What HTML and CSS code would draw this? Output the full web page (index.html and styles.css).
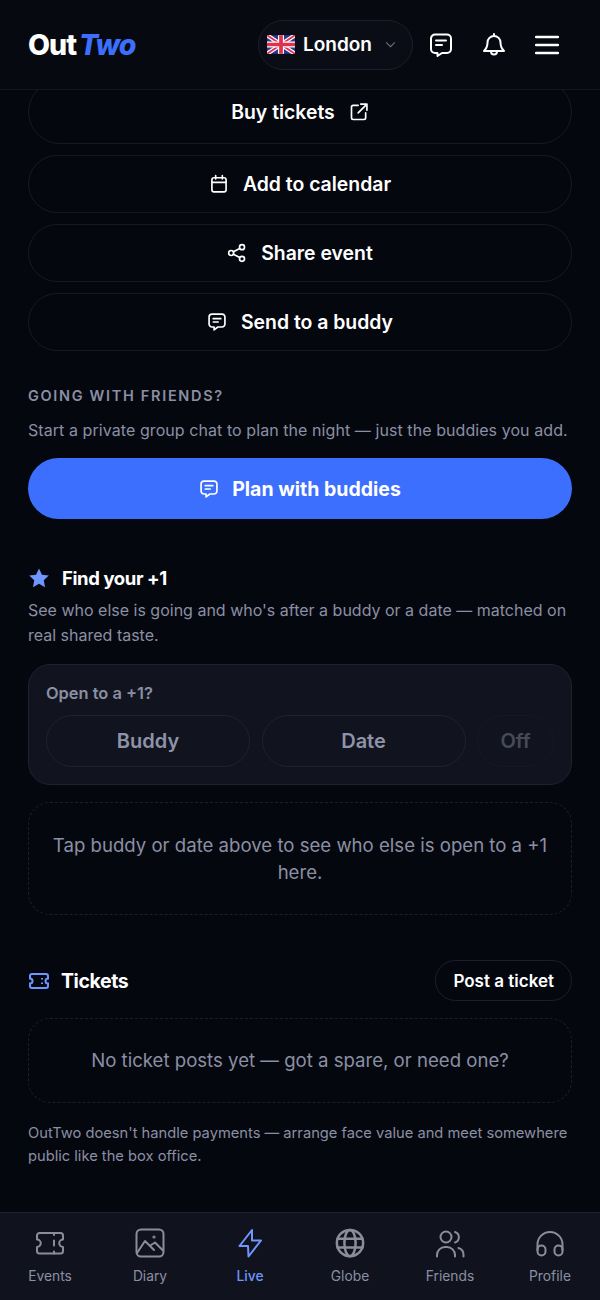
FILE: index.html
```html
<!DOCTYPE html>
<html lang="en">
<head>
    <meta charset="UTF-8">
    <title>OutTwo</title>
    <link rel="stylesheet" href="styles.css">
</head>
<body>
    <div class="app">
        <header class="topbar">
            <div class="logo">Out<em>Two</em></div>
            <button class="city">
                <svg class="flag" viewBox="0 0 60 40">
                    <rect width="60" height="40" rx="3" fill="#24398f"/>
                    <path d="M0 0L60 40M60 0L0 40" stroke="#fff" stroke-width="9"/>
                    <path d="M0 0L60 40M60 0L0 40" stroke="#e0304c" stroke-width="4"/>
                    <path d="M30 0V40M0 20H60" stroke="#fff" stroke-width="13"/>
                    <path d="M30 0V40M0 20H60" stroke="#e0304c" stroke-width="8"/>
                </svg>
                <span>London</span>
                <svg class="chev" viewBox="0 0 24 24"><path d="M4 8l8 8 8-8"/></svg>
            </button>
            <div class="top-btn">
                <svg class="ico top-ico" viewBox="0 0 24 24"><path d="M6 1.500h12a4 4 0 0 1 4 4V16a4 4 0 0 1-4 4h-5l-4.500 3v-3H6a4 4 0 0 1-4-4V5.500a4 4 0 0 1 4-4Z"/><path d="M7 7.500h10M7 12h6"/></svg>
            </div>
            <div class="top-btn">
                <svg class="ico top-ico" viewBox="0 0 24 24"><path d="M12 3a6.500 6.500 0 0 0-6.500 6.500c0 5-2 7-3.500 8.500h20c-1.500-1.500-3.500-3.500-3.500-8.500A6.500 6.500 0 0 0 12 3Z"/><path d="M12 1v2M9 18.500a3 3 0 0 0 6 0"/></svg>
            </div>
            <div class="top-btn">
                <svg class="ico top-ico menu-ico" viewBox="0 0 24 24"><path d="M1 4h22M1 12h22M1 20h22"/></svg>
            </div>
        </header>

        <main class="content">
            <div class="actions">
                <button class="btn btn-tall">Buy tickets <svg class="ico btn-ico" viewBox="0 0 24 24"><path d="M11 4H5a2 2 0 0 0-2 2v13a2 2 0 0 0 2 2h13a2 2 0 0 0 2-2v-6M14 2.500h7.500V10M21.500 2.500L11 13"/></svg></button>
                <button class="btn"><svg class="ico btn-ico" viewBox="0 0 24 24"><rect x="3.500" y="4.500" width="17" height="17" rx="2.500"/><path d="M3.500 10h17M8 2v4M16 2v4"/></svg> Add to calendar</button>
                <button class="btn"><svg class="ico btn-ico" viewBox="0 0 24 24"><circle cx="18" cy="5" r="3"/><circle cx="5" cy="12" r="3"/><circle cx="18" cy="19" r="3"/><path d="M7.700 10.500l7.600-4M7.700 13.500l7.600 4"/></svg> Share event</button>
                <button class="btn"><svg class="ico btn-ico" viewBox="0 0 24 24"><path d="M6 2.500h12a3.500 3.500 0 0 1 3.500 3.500v8.500a3.500 3.500 0 0 1-3.500 3.500h-5l-4.500 3.500v-3.500H6a3.500 3.500 0 0 1-3.500-3.500V6A3.500 3.500 0 0 1 6 2.500Z"/><path d="M7.500 8h9M7.500 12h6"/></svg> Send to a buddy</button>
            </div>

            <h4 class="eyebrow">GOING WITH FRIENDS?</h4>
            <p class="note">Start a private group chat to plan the night — just the buddies you add.</p>
            <button class="btn-primary"><svg class="ico btn-ico" viewBox="0 0 24 24"><path d="M6 2.500h12a3.500 3.500 0 0 1 3.500 3.500v8.500a3.500 3.500 0 0 1-3.500 3.500h-5l-4.500 3.500v-3.500H6a3.500 3.500 0 0 1-3.500-3.500V6A3.500 3.500 0 0 1 6 2.500Z"/><path d="M7.500 8h9M7.500 12h6"/></svg> Plan with buddies</button>

            <div class="sec-head plus-head">
                <svg class="sec-ico" viewBox="0 0 24 24"><path class="star" d="M12 1.500l3.200 6.900 7.500.9-5.500 5.200 1.400 7.500L12 18.300l-6.600 3.700 1.400-7.500L1.300 9.300l7.500-.9Z"/></svg>
                <h3>Find your +1</h3>
            </div>
            <p class="note plus-note">See who else is going and who's after a buddy or a date — matched on real shared taste.</p>

            <div class="card">
                <div class="card-label">Open to a +1?</div>
                <div class="pills">
                    <div class="pill">Buddy</div>
                    <div class="pill">Date</div>
                    <div class="pill off">Off</div>
                </div>
            </div>

            <div class="empty empty-plus">Tap buddy or date above to see who else is open to a +1 here.</div>

            <div class="sec-head tickets-head">
                <svg class="sec-ico ticket-blue" viewBox="0 0 22 22"><path d="M4 4h14a2 2 0 0 1 2 2v2.500a2.500 2.500 0 0 0 0 5V16a2 2 0 0 1-2 2H4a2 2 0 0 1-2-2v-2.500a2.500 2.500 0 0 0 0-5V6a2 2 0 0 1 2-2Z"/><path d="M14 8v1.500M14 12.500V14"/></svg>
                <h3>Tickets</h3>
                <button class="btn-small">Post a ticket</button>
            </div>

            <div class="empty empty-tickets">No ticket posts yet — got a spare, or need one?</div>
            <p class="small-note">OutTwo doesn't handle payments — arrange face value and meet somewhere public like the box office.</p>
        </main>

        <nav class="tabbar">
            <a class="tab">
                <svg class="tab-ico" viewBox="0 0 30 30"><path d="M4.500 5h21a2.500 2.500 0 0 1 2.500 2.500v4a3.500 3.500 0 0 0 0 7.500v4a2.500 2.500 0 0 1-2.500 2.500h-21A2.500 2.500 0 0 1 2 23v-4a3.500 3.500 0 0 0 0-7.500v-4A2.500 2.500 0 0 1 4.500 5Z"/><path d="M19 5v2M19 12.500v5M19 23.500v2"/></svg>
                <span>Events</span>
            </a>
            <a class="tab">
                <svg class="tab-ico" viewBox="0 0 30 30"><rect x="1.500" y="1.500" width="27" height="27" rx="4.500"/><path d="M2 25l8-12 9 9M16 17l4-2.500 8 8"/><circle cx="19" cy="9" r=".6"/></svg>
                <span>Diary</span>
            </a>
            <a class="tab active">
                <svg class="tab-ico" viewBox="0 0 30 30"><path d="M17 2L4.500 18H13l.5 10.500L26 12.500h-9Z"/></svg>
                <span>Live</span>
            </a>
            <a class="tab">
                <svg class="tab-ico" viewBox="0 0 24 24"><circle cx="12" cy="12" r="10.500"/><ellipse cx="12" cy="12" rx="4.500" ry="10.500"/><path d="M2 8.500h20M2 15.500h20"/></svg>
                <span>Globe</span>
            </a>
            <a class="tab">
                <svg class="tab-ico" viewBox="0 0 30 30"><circle cx="11" cy="9" r="5.500"/><path d="M2 28.500V27a8 8 0 0 1 8-8h2a8 8 0 0 1 8 8v1.500M20 4a5.500 5.500 0 0 1 0 10.500M23.500 20a7 7 0 0 1 5 7v1.500"/></svg>
                <span>Friends</span>
            </a>
            <a class="tab">
                <svg class="tab-ico" viewBox="0 0 30 30"><path d="M2.500 22v-5.500a12.500 12.500 0 0 1 25 0V22"/><rect x="2.500" y="17.500" width="8" height="10" rx="4"/><rect x="19.500" y="17.500" width="8" height="10" rx="4"/></svg>
                <span>Profile</span>
            </a>
        </nav>
    </div>
</body>
</html>
```

FILE: styles.css
```css
* {
    box-sizing: border-box;
}
html, body {
    margin: 0;
    padding: 0;
}
body {
    background: #05070f;
    color: #fff;
    font-family: Inter, "Liberation Sans", sans-serif;
}
button {
    font-family: inherit;
    color: inherit;
    cursor: pointer;
}
h3, h4, p {
    margin: 0;
}
.app {
    height: 1300px;
    display: flex;
    flex-direction: column;
    overflow: hidden;
}

/* header */
.topbar {
    flex: none;
    height: 90px;
    display: flex;
    align-items: center;
    gap: 3px;
    padding: 0 28px;
    background: #070910;
    border-bottom: 1px solid #141721;
    position: relative;
    z-index: 2;
}
.logo {
    font-size: 28.500px;
    font-weight: 800;
    letter-spacing: -1px;
    margin-right: auto;
}
.logo em {
    color: #3d6fff;
    font-weight: 800;
    margin-left: 3px;
}
.city {
    width: 155px;
    height: 50px;
    display: flex;
    align-items: center;
    padding: 0 8px;
    background: #0b0d16;
    border: 1px solid #1c1f2b;
    border-radius: 25px;
    font-size: 19px;
    font-weight: 600;
}
.flag {
    width: 28px;
    height: 19px;
    margin-right: 8px;
}
.chev {
    width: 13px;
    height: 13px;
    margin-left: auto;
    margin-right: 7px;
    fill: none;
    stroke: #6c7080;
    stroke-width: 2;
}
.top-btn {
    width: 50px;
    height: 50px;
    display: flex;
    align-items: center;
    justify-content: center;
}
.ico {
    fill: none;
    stroke: #fff;
    stroke-width: 2;
    stroke-linecap: round;
    stroke-linejoin: round;
}
.top-ico {
    width: 24px;
    height: 24px;
}
.menu-ico {
    stroke-width: 2.500;
}

/* main column */
.content {
    flex: 1;
    min-height: 0;
    overflow: hidden;
    padding: 0 28px;
}
.actions {
    display: flex;
    flex-direction: column;
    gap: 11px;
    margin-top: -10px;
}
.btn {
    flex: none;
    height: 58px;
    display: flex;
    align-items: center;
    justify-content: center;
    gap: 14px;
    background: transparent;
    border: 1px solid #171a24;
    border-radius: 29px;
    font-size: 19.400px;
    font-weight: 600;
}
.btn-tall {
    height: 64px;
    border-radius: 32px;
}
.btn-ico {
    width: 20px;
    height: 20px;
    flex: none;
}
.eyebrow {
    font-size: 14.500px;
    font-weight: 600;
    letter-spacing: 1.680px;
    color: #8b8fa3;
    line-height: 18px;
    margin-top: 36px;
}
.note {
    font-size: 16px;
    letter-spacing: .07px;
    line-height: 25px;
    color: #8b8fa3;
    margin-top: 13px;
}
.btn-primary {
    width: 100%;
    height: 61px;
    display: flex;
    align-items: center;
    justify-content: center;
    gap: 13px;
    background: #3d6fff;
    border: 0;
    border-radius: 31px;
    font-size: 19.500px;
    font-weight: 700;
    margin-top: 15px;
}
.sec-head {
    display: flex;
    align-items: center;
    gap: 12px;
}
.sec-head h3 {
    font-weight: 700;
    letter-spacing: -.4px;
}
.plus-head h3 {
    font-size: 18.500px;
}
.tickets-head h3 {
    font-size: 19.500px;
}
.plus-head {
    margin-top: 47px;
    height: 24px;
}
.sec-ico {
    width: 22px;
    height: 22px;
    flex: none;
}
.star {
    fill: #6f95ff;
}
.ticket-blue {
    fill: none;
    stroke: #6f95ff;
    stroke-width: 2;
}
.plus-note {
    letter-spacing: 0;
    margin-top: 8px;
}

/* open to a +1 card */
.card {
    height: 121px;
    background: #11141f;
    border: 1px solid #1e2230;
    border-radius: 22px;
    padding: 17px;
    margin-top: 16px;
}
.card-label {
    font-size: 16.400px;
    font-weight: 600;
    line-height: 22px;
    color: #8b8fa3;
}
.pills {
    display: flex;
    gap: 11.500px;
    margin-top: 11px;
}
.pill {
    flex: 1;
    height: 52px;
    display: flex;
    align-items: center;
    justify-content: center;
    border: 1px solid #1e2230;
    border-radius: 26px;
    font-size: 20px;
    font-weight: 600;
    color: #8f93a8;
}
.pill.off {
    flex: none;
    width: 77px;
    color: #474a58;
    border-color: #161924;
}

/* dashed placeholders */
.empty {
    display: flex;
    align-items: center;
    justify-content: center;
    text-align: center;
    border: 1px dashed #1c1f2b;
    border-radius: 22px;
    font-size: 18.600px;
    line-height: 27px;
    color: #8b8fa3;
    padding: 0 22px;
}
.empty-plus {
    height: 113px;
    margin-top: 17px;
}
.tickets-head {
    margin-top: 45px;
    height: 41px;
    gap: 11px;
}
.btn-small {
    margin-left: auto;
    height: 41px;
    padding: 0 17px;
    background: transparent;
    border: 1px solid #1c1f2b;
    border-radius: 21px;
    font-size: 17px;
    font-weight: 600;
}
.empty-tickets {
    height: 85px;
    margin-top: 17px;
}
.small-note {
    font-size: 14.700px;
    line-height: 23px;
    color: #8b8fa3;
    margin-top: 19px;
}

/* bottom tabs */
.tabbar {
    flex: none;
    height: 88px;
    display: flex;
    background: #10131e;
    border-top: 1px solid #1e2230;
}
.tab {
    flex: 1;
    display: flex;
    flex-direction: column;
    align-items: center;
    padding-top: 15px;
    font-size: 13.800px;
    line-height: 18px;
    color: #8b8fa3;
}
.tab span {
    margin-top: 9px;
}
.tab-ico {
    width: 30px;
    height: 30px;
    fill: none;
    stroke: #8b8e99;
    stroke-width: 2;
    stroke-linecap: round;
    stroke-linejoin: round;
}
.tab.active {
    color: #6f95ff;
    font-weight: 500;
}
.tab.active .tab-ico {
    stroke: #6f95ff;
}
```
